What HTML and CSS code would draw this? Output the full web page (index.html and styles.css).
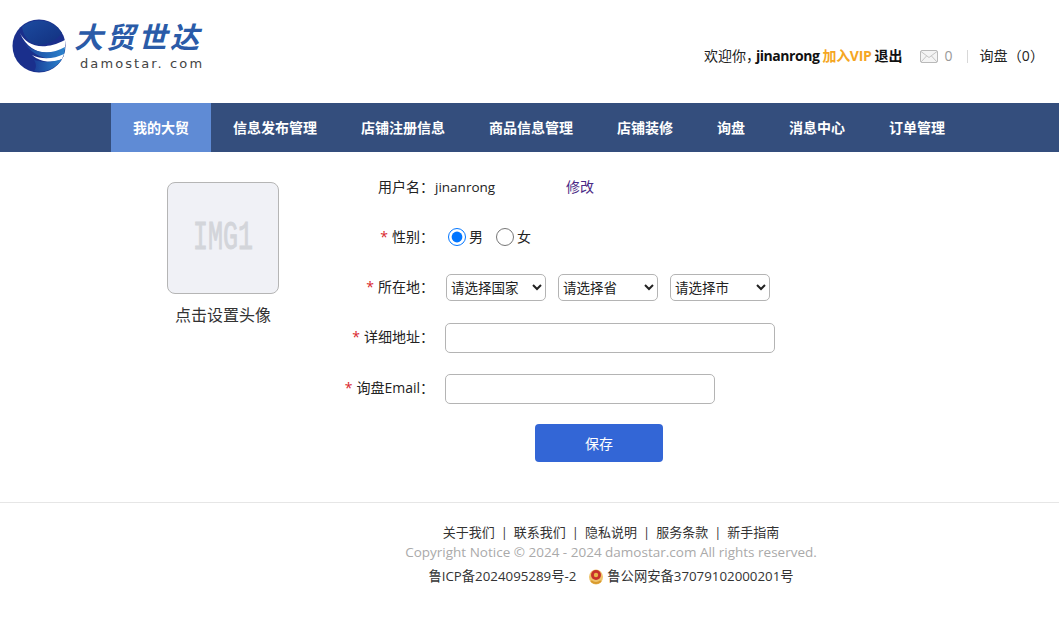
FILE: index.html
```html
<!DOCTYPE html>
<html lang="zh-CN">
<head>
<meta charset="utf-8">
<title>大贸世达</title>
<link rel="stylesheet" href="styles.css">
</head>
<body>
<header class="top">
  <a class="logo">
    <svg class="globe" width="54" height="54" viewBox="0 0 54 54">
      <defs>
        <linearGradient id="g1" x1="0" y1="0" x2="1" y2="1"><stop offset="0" stop-color="#1c4ba0"/><stop offset="1" stop-color="#12307f"/></linearGradient>
        <linearGradient id="g2" x1="0" y1="0" x2="1" y2="0"><stop offset="0" stop-color="#1a3f98"/><stop offset="1" stop-color="#2b82cc"/></linearGradient>
      </defs>
      <circle cx="27" cy="27" r="26.5" fill="#1a2f8c"/>
      <path d="M10 8 A26.5 26.5 0 0 1 50 14 C44 22 36 25 28 26 C20 26 12 20 10 8Z" fill="url(#g1)"/>
      <path d="M8 14 C14 26 30 33 53 21 L53 30 C36 38 16 34 8 14Z" fill="#fff"/>
      <path d="M9 19 C16 33 36 38 53 28 A26.5 26.5 0 0 1 51 38 C36 43 20 38 9 19Z" fill="url(#g2)"/>
      <path d="M20 36 C30 41 42 40 52 35 L50 40 C40 45 28 43 20 36Z" fill="#fff"/>
      <path d="M22 41 C32 44 42 43 50 40 A26.5 26.5 0 0 1 22 52 C25 48 24 44 22 41Z" fill="url(#g2)"/>
    </svg>
    <span class="logo-words">
      <span class="logo-cn">大贸世达</span>
      <span class="logo-en">damostar. com</span>
    </span>
  </a>
  <div class="user-bar">
    <span class="hello">欢迎你，</span><b class="uname">jinanrong</b>
    <b class="vip">加入VIP</b>
    <b class="logout">退出</b>
    <svg class="mail" width="18" height="13" viewBox="0 0 18 13">
      <rect x="0.5" y="0.5" width="17" height="12" rx="1.5" fill="#f4f4f4" stroke="#b9b9b9"/>
      <path d="M1 1.5 L9 7.5 L17 1.5 M1 12 L6.5 6 M17 12 L11.5 6" fill="none" stroke="#c4c4c4"/>
    </svg>
    <span class="count">0</span>
    <span class="sep"></span>
    <span class="inq">询盘（0）</span>
  </div>
</header>

<nav class="nav">
  <a class="nav-item active">我的大贸</a>
  <a class="nav-item">信息发布管理</a>
  <a class="nav-item">店铺注册信息</a>
  <a class="nav-item">商品信息管理</a>
  <a class="nav-item">店铺装修</a>
  <a class="nav-item">询盘</a>
  <a class="nav-item">消息中心</a>
  <a class="nav-item">订单管理</a>
</nav>

<main class="main">
  <section class="avatar-col">
    <div class="avatar"><span class="avatar-text">IMG1</span></div>
    <p class="avatar-cap">点击设置头像</p>
  </section>
  <form class="form">
    <div class="row row-name">
      <span class="label">用户名：</span>
      <span class="name-val">jinanrong</span>
      <a class="edit">修改</a>
    </div>
    <div class="row row-gender">
      <span class="label"><i class="req">*</i>性别：</span>
      <label class="radio"><input type="radio" name="sex" checked>男</label>
      <label class="radio"><input type="radio" name="sex">女</label>
    </div>
    <div class="row row-place">
      <span class="label"><i class="req">*</i>所在地：</span>
      <select class="sel"><option>请选择国家</option></select>
      <select class="sel"><option>请选择省</option></select>
      <select class="sel"><option>请选择市</option></select>
    </div>
    <div class="row row-addr">
      <span class="label"><i class="req">*</i>详细地址：</span>
      <input class="text wide" type="text">
    </div>
    <div class="row row-mail">
      <span class="label"><i class="req">*</i>询盘Email：</span>
      <input class="text narrow" type="text">
    </div>
    <button class="save" type="button">保存</button>
  </form>
</main>

<footer class="foot">
  <div class="foot-links">
    <a>关于我们</a><i>|</i><a>联系我们</a><i>|</i><a>隐私说明</a><i>|</i><a>服务条款</a><i>|</i><a>新手指南</a>
  </div>
  <div class="copy">Copyright Notice © 2024 - 2024 damostar.com All rights reserved.</div>
  <div class="icp">
    <span>鲁ICP备2024095289号-2</span>
    <svg class="badge" width="16" height="17" viewBox="0 0 16 17">
      <ellipse cx="8" cy="9" rx="7" ry="7.5" fill="#eec36a"/>
      <circle cx="8" cy="7" r="5" fill="#c8322a"/>
      <circle cx="8" cy="7" r="2.2" fill="#e8b64a"/>
      <path d="M3 13 Q8 17 13 13" fill="none" stroke="#d99a2e" stroke-width="2"/>
    </svg>
    <span>鲁公网安备37079102000201号</span>
  </div>
</footer>
</body>
</html>
```
FILE: styles.css
```css
* { box-sizing: border-box; }
html, body { margin: 0; padding: 0; }
body {
  background: #fff;
  color: #222;
  font: 14px/20px "Open Sans", "Noto Sans CJK SC", sans-serif;
  overflow: hidden;
}
p { margin: 0; }
i { font-style: normal; }

.top {
  height: 103px;
  display: flex;
  align-items: flex-start;
  justify-content: space-between;
  padding: 19px 15px 0 12px;
}
.logo { display: flex; gap: 10px; }
.globe { display: block; }
.logo-words { display: flex; flex-direction: column; width: 130px; }
.logo-cn {
  font: italic 700 29px/36px "Noto Sans CJK SC", sans-serif;
  color: #2a5ba8;
  letter-spacing: 3px;
  margin: -2px 0 0 -2px;
  white-space: nowrap;
}
.logo-en {
  font: 13px/14px "DejaVu Sans", sans-serif;
  color: #444;
  letter-spacing: 2.1px;
  padding-left: 4px;
  margin-top: 4px;
  white-space: nowrap;
}

.user-bar {
  display: flex;
  align-items: center;
  margin-top: 27px;
  height: 20px;
  color: #222;
}
.hello { margin-right: -4px; }
.uname { color: #111; font-weight: 700; letter-spacing: -0.45px; }
.vip { color: #f5a623; font-weight: 700; margin-left: 3px; letter-spacing: -0.3px; }
.logout { color: #111; font-weight: 700; margin-left: 3px; }
.mail { margin-left: 18px; }
.count { color: #999; margin-left: 6px; }
.sep { width: 1px; height: 13px; background: #d8d8d8; margin: 0 11px 0 15px; }
.inq { color: #222; letter-spacing: 0.1px; }

.nav {
  height: 49px;
  background: #344e7d;
  display: flex;
  padding-left: 111px;
}
.nav-item {
  padding: 0 22px;
  color: #fff;
  font-weight: 700;
  line-height: 49px;
  white-space: nowrap;
}
.active { background: #5f8bd5; width: 100px; }

.main {
  display: flex;
  height: 350px;
  padding: 30px 0 0 167px;
}
.avatar-col { width: 112px; }
.avatar {
  width: 112px;
  height: 112px;
  padding-top: 2px;
  border: 1px solid #b5b5b5;
  border-radius: 8px;
  background: #f0f1f6;
  display: flex;
  align-items: center;
  justify-content: center;
}
.avatar-text {
  display: block;
  font: 25px/30px "Liberation Mono", monospace;
  color: #d3d5da;
  -webkit-text-stroke: 0.6px #d3d5da;
  transform: scaleY(1.65);
}
.avatar-cap {
  font-size: 16px;
  line-height: 22px;
  margin-top: 10px;
  text-align: center;
  color: #333;
  white-space: nowrap;
}

.form { margin-left: 2px; width: 500px; }
.row { display: flex; align-items: center; color: #222; }
.label { width: 153px; padding-bottom: 2px; text-align: right; white-space: nowrap; }
.req { color: #d9262c; margin-right: 4px; }
.row-name { height: 20px; margin-top: -4px; }
.name-val { margin-left: 1px; width: 131px; font-size: 13.5px; padding-bottom: 2px; }
.edit { color: #4b2a86; padding-bottom: 2px; }
.row-gender { height: 24px; margin-top: 28px; }
.radio { display: flex; align-items: center; padding-bottom: 2px; }
.radio input { width: 18px; height: 18px; margin: 0 3px 0 0; }
.row-gender .radio:first-of-type { margin-left: 14px; }
.radio + .radio { margin-left: 13px; }
.row-place { height: 27px; margin-top: 24px; gap: 12px; }
.sel {
  width: 100px;
  height: 27px;
  font: 13.5px "Open Sans", "Noto Sans CJK SC", sans-serif;
  color: #222;
  background: #fff;
  border: 1px solid #b4b4b4;
  border-radius: 5px;
}
.row-addr { height: 30px; margin-top: 22px; }
.row-mail { height: 30px; margin-top: 21px; }
.text {
  height: 30px;
  margin-left: 11px;
  border: 1px solid #b4b4b4;
  border-radius: 5px;
  background: #fff;
}
.wide { width: 330px; }
.narrow { width: 270px; }
.save {
  display: block;
  width: 128px;
  height: 38px;
  margin: 20px 0 0 254px;
  background: #3366d6;
  color: #fff;
  border: 0;
  border-radius: 4px;
  font: 14px "Open Sans", "Noto Sans CJK SC", sans-serif;
}

.foot {
  border-top: 1px solid #e6e6e6;
  padding: 19px 0 0 163px;
  text-align: center;
  height: 137px;
}
.foot-links { height: 20px; line-height: 20px; font-size: 13px; color: #333; }
.foot-links i { margin: 0 6px; color: #333; }
.copy { height: 20px; color: #aaa; font-size: 13.5px; line-height: 20px; }
.icp {
  display: flex;
  justify-content: center;
  align-items: center;
  margin-top: 4px;
  height: 20px;
  font-size: 13.3px;
  color: #333;
}
.badge { margin: 0 3px 0 12px; }
```
